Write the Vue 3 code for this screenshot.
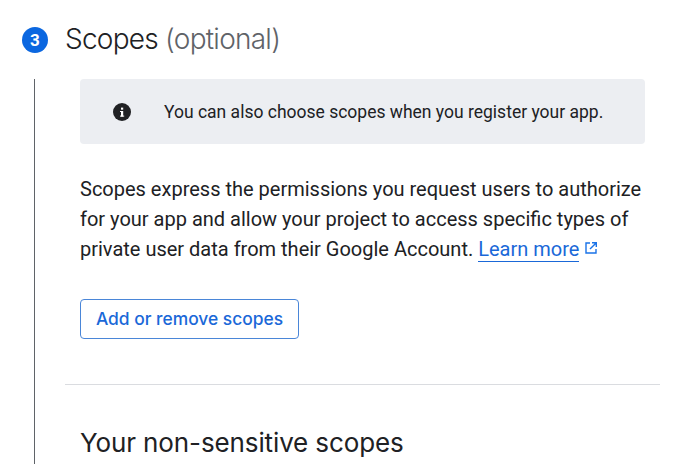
<script setup>
const title = 'Scopes'
</script>

<template>
  <div class="page">
    <div class="head">
      <div class="badge">3</div>
      <h2 class="title">{{ title }} <span class="opt">(optional)</span></h2>
    </div>
    <div class="step">
      <div class="rail"></div>
      <div class="body">
        <div class="indent">
          <div class="notice">
            <svg class="info" viewBox="0 0 18 18" width="18" height="18">
              <circle cx="9" cy="9" r="9" fill="#202124" />
              <rect x="8" y="8" width="2.2" height="5.6" fill="#fff" />
              <rect x="8" y="4.6" width="2.2" height="2.1" fill="#fff" />
              <rect x="7" y="8" width="1.2" height="1" fill="#fff" />
              <rect x="7" y="12.6" width="4.2" height="1" fill="#fff" />
            </svg>
            <span class="notice-text">You can also choose scopes when you register your app.</span>
          </div>
          <div class="desc">
            <div>Scopes express the permissions you request users to authorize</div>
            <div>for your app and allow your project to access specific types of</div>
            <div class="last">
              <span>private user data from their Google Account.</span>
              <a class="link">Learn more</a>
              <svg class="ext" viewBox="0 0 14 14" width="14" height="14">
                <path d="M6 2H2v10h10V8" fill="none" stroke="#1a73e8" stroke-width="1.4" />
                <path d="M8 1.7h4.3V6M12.1 1.9 6 8" fill="none" stroke="#1a73e8" stroke-width="1.4" />
              </svg>
            </div>
          </div>
          <button class="btn">Add or remove scopes</button>
        </div>
        <hr class="rule" />
        <h3 class="sub">Your non-sensitive scopes</h3>
      </div>
    </div>
  </div>
</template>

<style scoped>
.page {
  width: 699px;
  height: 464px;
  overflow: hidden;
  background: #fff;
  font-family: Roboto, "Liberation Sans", sans-serif;
  color: #202124;
  box-sizing: border-box;
  padding: 18px 0 0 22px;
}
.head {
  display: flex;
  align-items: center;
  gap: 17px;
  height: 42px;
}
.badge {
  width: 26px;
  height: 26px;
  border-radius: 50%;
  background: #0b67e0;
  color: #fff;
  font-size: 17px;
  font-weight: 700;
  display: flex;
  align-items: center;
  justify-content: center;
  margin-top: 2px;
}
.title {
  margin: 0;
  font-size: 28px;
  font-weight: 350;
  font-family: Inter, Roboto, sans-serif;
  letter-spacing: -0.75px;
}
.opt {
  color: #5f6368;
}
.step {
  display: flex;
  margin-top: 19px;
}
.rail {
  width: 1px;
  margin-left: 12px;
  background: #5f6368;
  height: 385px;
  flex: none;
}
.body {
  margin-left: 30px;
  width: 595px;
  flex: none;
}
.indent {
  padding-left: 15px;
  width: 565px;
}
.notice {
  background: #eceef2;
  border-radius: 4px;
  height: 65px;
  display: flex;
  align-items: center;
  padding-left: 33px;
  gap: 33px;
  box-sizing: border-box;
}
.info {
  flex: none;
}
.notice-text {
  font-size: 17.5px;
}
.desc {
  margin: 31px 0 0;
  font-size: 20px;
  line-height: 29.5px;
  white-space: nowrap;
}
.last {
  display: flex;
  align-items: baseline;
  gap: 5px;
  margin-top: 1px;
}
.link {
  color: #1a68d8;
  line-height: 24px;
  border-bottom: 1px solid #1a68d8;
}
.ext {
  align-self: center;
  margin-top: -3px;
  flex: none;
}
.btn {
  display: block;
  margin-top: 34px;
  width: 219px;
  height: 40px;
  background: #fff;
  border: 1px solid #4a86d8;
  border-radius: 4px;
  color: #1a68d8;
  font-family: Inter, Roboto, sans-serif;
  font-size: 17.4px;
  font-weight: 500;
  padding: 0;
}
.rule {
  margin: 45px 0 0;
  border: 0;
  border-top: 1px solid #dadce0;
}
.sub {
  margin: 42px 0 0 15px;
  font-size: 26px;
  font-weight: 400;
  font-family: Inter, Roboto, sans-serif;
  letter-spacing: -0.12px;
}
</style>
